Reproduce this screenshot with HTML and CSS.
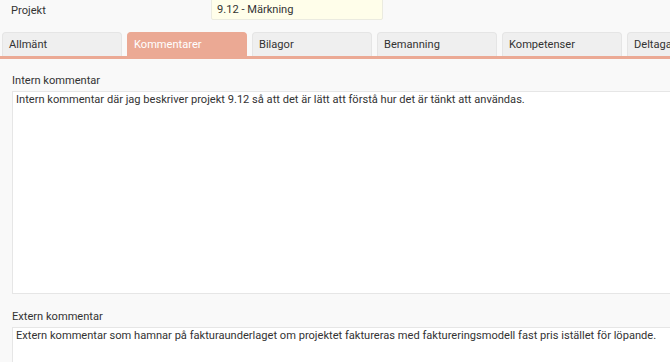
FILE: index.html
```html
<!DOCTYPE html>
<html>
<head>
    <meta charset="utf-8">
    <title>Projekt 9.12 - Kommentarer</title>
    <link rel="stylesheet" href="styles.css">
</head>
<body>
<div class="page">
    <div class="field-row">
        <label class="field-label">Projekt</label>
        <div class="field-value">9.12 - Märkning</div>
    </div>

    <div class="tabs">
        <div class="tab">Allmänt</div>
        <div class="tab active">Kommentarer</div>
        <div class="tab">Bilagor</div>
        <div class="tab">Bemanning</div>
        <div class="tab">Kompetenser</div>
        <div class="tab">Deltagare</div>
    </div>

    <div class="panel">
        <div class="comment">
            <div class="comment-label">Intern kommentar</div>
            <div class="comment-box tall">Intern kommentar där jag beskriver projekt 9.12 så att det är lätt att förstå hur det är tänkt att användas.</div>
        </div>
        <div class="comment">
            <div class="comment-label">Extern kommentar</div>
            <div class="comment-box tall">Extern kommentar som hamnar på fakturaunderlaget om projektet faktureras med faktureringsmodell fast pris istället för löpande.</div>
        </div>
    </div>
</div>
</body>
</html>
```

FILE: styles.css
```css
body, html {
    margin: 0;
    padding: 0;
    background-color: #f9f9f9;
    color: #333333;
    font-family: "Roboto", "Liberation Sans", Arial, sans-serif;
    font-size: 11.1px;
    overflow: hidden;
}

.page {
    width: 720px;
}

.field-row {
    display: flex;
    align-items: center;
    height: 20px;
}

.field-label {
    width: 200px;
    padding-left: 11px;
}

.field-value {
    box-sizing: border-box;
    width: 172px;
    height: 28px;
    margin-top: -8px;
    padding: 8px 0 0 5px;
    line-height: 18px;
    background-color: #fffeea;
    border: 1px solid #ebebe0;
    border-radius: 0 0 2px 2px;
}

.tabs {
    display: flex;
    gap: 5px;
    margin-top: 12px;
    padding-left: 2px;
    border-bottom: 3px solid #eba994;
}

.tab {
    box-sizing: border-box;
    width: 120px;
    height: 24px;
    line-height: 23px;
    padding-left: 6px;
    background-color: #efefef;
    border: 1px solid #e5e5e5;
    border-bottom: none;
    border-radius: 4px 4px 0 0;
    flex-shrink: 0;
}

.tab.active {
    background-color: #eba994;
    border-color: #eba994;
    color: #ffffff;
}

.panel {
    padding: 14px 0 0 12px;
}

.comment-label {
    line-height: 15px;
    margin-bottom: 3px;
}

.comment-box {
    box-sizing: border-box;
    background-color: #ffffff;
    border: 1px solid #e6e6e6;
    padding: 0 3px;
    line-height: 16px;
}

.comment-box.tall {
    height: 203px;
    margin-bottom: 15px;
}
```
